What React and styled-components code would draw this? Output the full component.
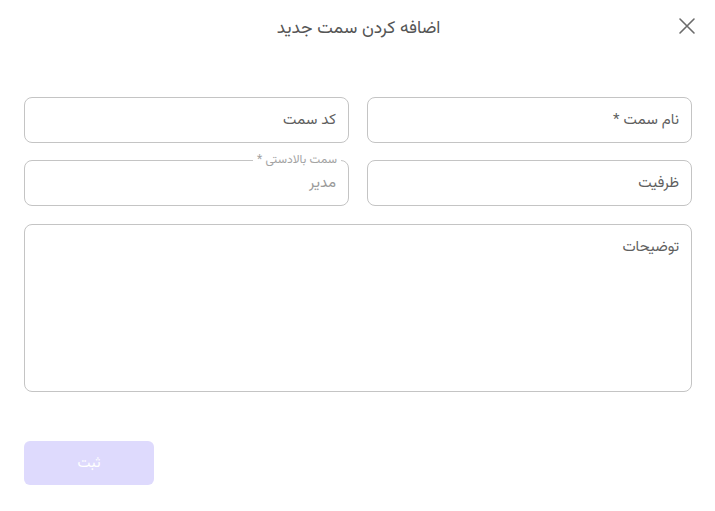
import React from "react";
import styled, { createGlobalStyle } from "styled-components";

const GlobalStyle = createGlobalStyle`
  html, body {
    margin: 0;
    padding: 0;
    background: #ffffff;
  }
  body {
    font-family: "Vazirmatn", "Noto Sans Arabic", "DejaVu Sans", sans-serif;
  }
`;

const Dialog = styled.div`
  width: 715px;
  height: 511px;
  box-sizing: border-box;
  direction: rtl;
  background: #fff;
  display: flex;
  flex-direction: column;
`;

const Header = styled.div`
  height: 56px;
  display: flex;
  align-items: center;
  justify-content: center;
  position: relative;
`;

const Title = styled.h2`
  margin: 0;
  font-size: 17.5px;
  font-weight: 400;
  color: #555;
  margin-left: 2px;
`;

const CloseButton = styled.button`
  position: absolute;
  right: 18px;
  top: 16px;
  border: none;
  background: none;
  padding: 0;
  width: 20px;
  height: 20px;
  cursor: pointer;
  display: flex;
  align-items: center;
  justify-content: center;
`;

const Form = styled.form`
  padding: 41px 23px 0 24px;
  display: flex;
  flex-direction: column;
`;

const Grid = styled.div`
  display: grid;
  grid-template-columns: 1fr 1fr;
  column-gap: 18px;
  row-gap: 17px;
`;

const Field = styled.div`
  position: relative;
  height: ${(p) => p.$height || 46}px;
  box-sizing: border-box;
  border: 1px solid #c4c4c4;
  border-radius: 8px;
  padding: ${(p) => (p.$top ? "11px 12px" : "0 12px")};
  display: flex;
  align-items: ${(p) => (p.$top ? "flex-start" : "center")};
  font-size: 15px;
  color: ${(p) => (p.$muted ? "#9a9a9a" : "#5f5f5f")};
`;

const FloatLabel = styled.span`
  position: absolute;
  top: -9px;
  right: 7px;
  background: #fff;
  padding: 0 4px;
  font-size: 12px;
  color: #a3a3a3;
  line-height: 16px;
`;

const Wide = styled.div`
  margin-top: 18px;
`;

const Footer = styled.div`
  margin-top: 49px;
  display: flex;
  justify-content: flex-end;
`;

const Submit = styled.button`
  width: 130px;
  height: 44px;
  border: none;
  border-radius: 6px;
  background: #dedafd;
  color: #fff;
  font-family: inherit;
  font-size: 14.5px;
`;

export default function App() {
  return (
    <>
      <GlobalStyle />
      <Dialog>
        <Header>
          <Title>اضافه کردن سمت جدید</Title>
          <CloseButton aria-label="close">
            <svg width="18" height="18" viewBox="0 0 18 18">
              <path d="M2 2 L16 16 M16 2 L2 16" stroke="#6b6b6b" strokeWidth="1.6" strokeLinecap="round" />
            </svg>
          </CloseButton>
        </Header>
        <Form>
          <Grid>
            <Field>نام سمت *</Field>
            <Field>کد سمت</Field>
            <Field>ظرفیت</Field>
            <Field $muted>
              <FloatLabel>سمت بالادستی *</FloatLabel>
              مدیر
            </Field>
          </Grid>
          <Wide>
            <Field $height={168} $top>توضیحات</Field>
          </Wide>
          <Footer>
            <Submit type="button">ثبت</Submit>
          </Footer>
        </Form>
      </Dialog>
    </>
  );
}
